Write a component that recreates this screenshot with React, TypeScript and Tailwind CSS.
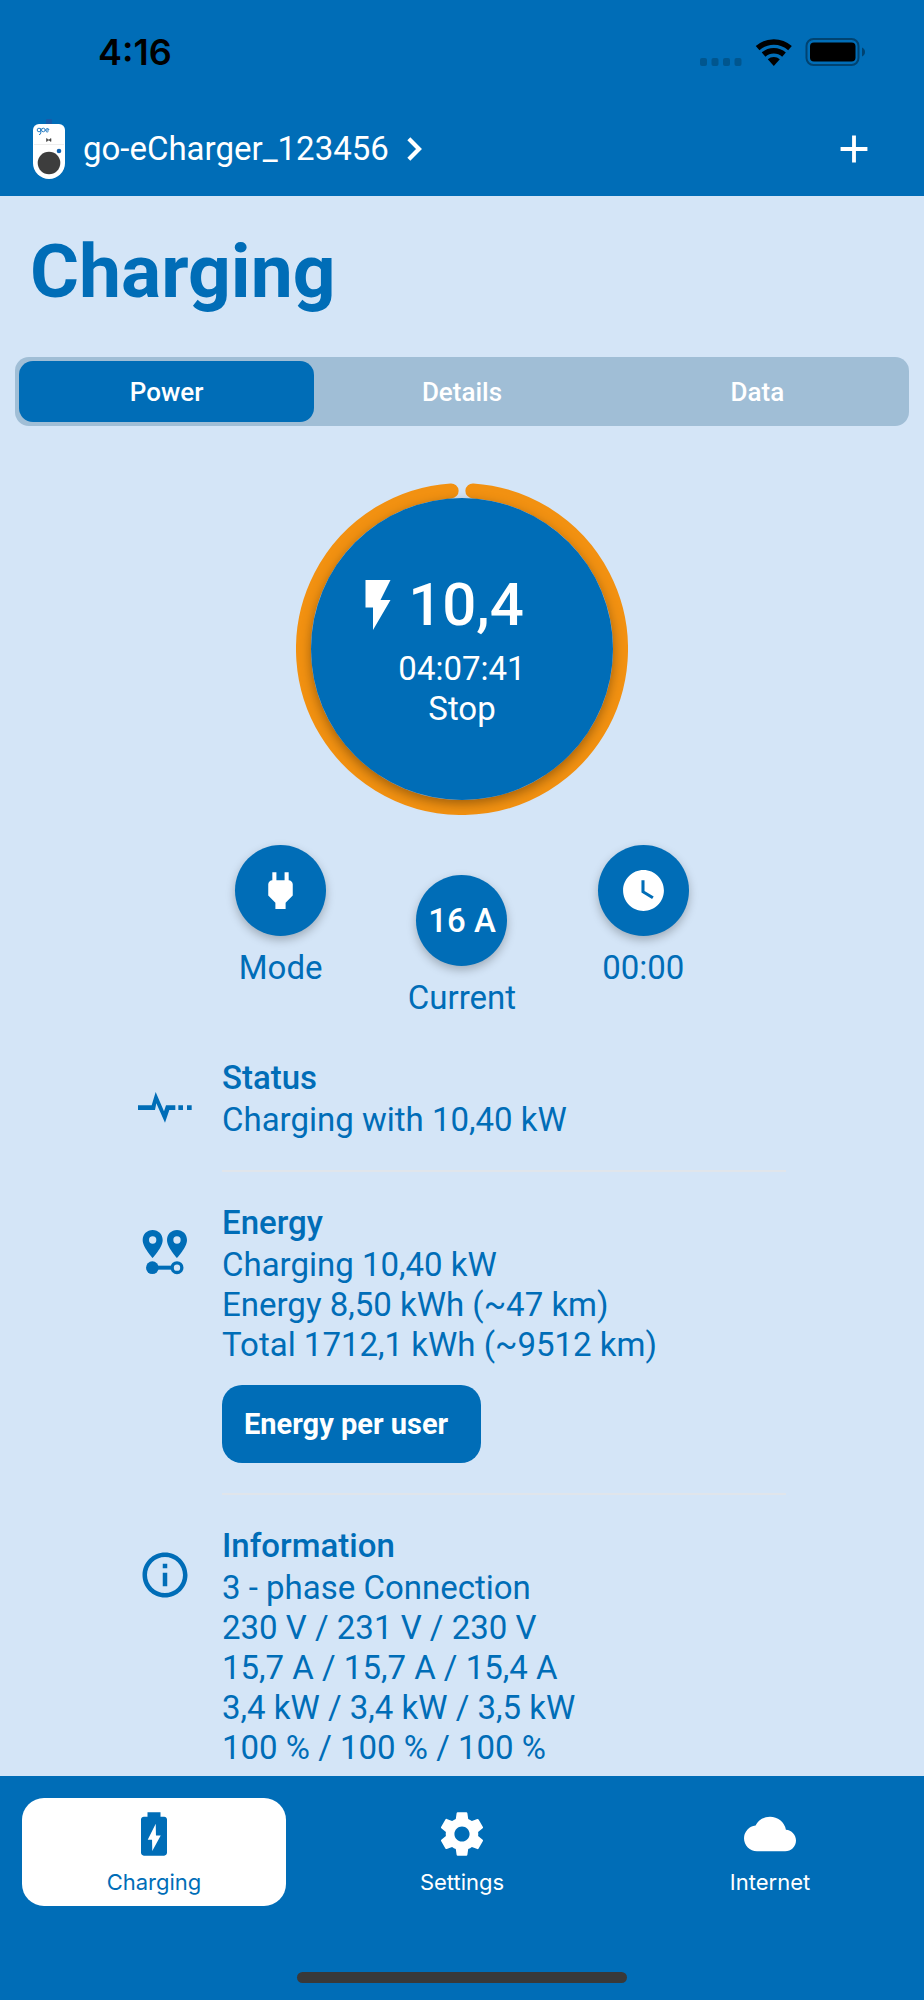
import React, { useState } from 'react'
import {
  MdAdd,
  MdCloud,
  MdFlashOn,
  MdInfoOutline,
  MdPower,
  MdWatchLater
} from 'react-icons/md'

const tabs = ['Power', 'Details', 'Data']

const StatusIcons: React.FC = () => (
  <svg className="h-7 w-[166px]" viewBox="0 0 166 28" aria-hidden="true">
    <g fill="#00568f">
      <rect x="1" y="20" width="7" height="8" rx="2" />
      <rect x="12.500" y="20" width="7" height="8" rx="2" />
      <rect x="24" y="20" width="7" height="8" rx="2" />
      <rect x="35.500" y="20" width="7" height="8" rx="2" />
    </g>
    <g fill="none" stroke="#000" strokeWidth="5.500">
      <path d="M58.600 10.100A24.250 24.250 0 0 1 91 10.100" />
      <path d="M64.600 16.600A15.250 15.250 0 0 1 85 16.600" />
    </g>
    <path d="M68.800 21.300A9 9 0 0 1 80.800 21.300L74.800 28z" />
    <rect x="107.500" y="1" width="52" height="26" rx="7" fill="none" stroke="#004371" strokeWidth="2" />
    <rect x="111" y="4.500" width="45.500" height="19" rx="4" />
    <path d="M163 9.500v9c1.800-.800 3-2.500 3-4.500s-1.200-3.700-3-4.500z" fill="#004371" />
  </svg>
)

const ChargerIcon: React.FC = () => (
  <svg className="h-[60px] w-8" viewBox="0 0 32 60" aria-hidden="true">
    <rect x="13" y="0" width="6" height="6" rx="1" fill="#1a5aa8" />
    <path d="M6 5h20a6 6 0 0 1 6 6v33a16 16 0 0 1-32 0V11a6 6 0 0 1 6-6z" fill="#fff" />
    <path d="M1 25.500h30" stroke="#eee" strokeWidth="1" />
    <g fill="none" stroke="#2c7fc4" strokeWidth="1">
      <circle cx="6" cy="11" r="1.800" />
      <path d="M7.800 9v5a1.800 1.800 0 0 1-1.800 1.600" />
      <circle cx="10.300" cy="11" r="1.800" />
      <path d="M12.500 11h3.500a1.700 1.700 0 1 0-.6 1.600" />
    </g>
    <path d="M13.500 19.500l2.200 1.500-2.200 1.500zM18 19.500l-2.200 1.500 2.200 1.500z" fill="#444" stroke="#444" strokeWidth=".6" />
    <circle cx="26" cy="32" r="2.300" fill="#1263b0" />
    <circle cx="16" cy="44" r="11.300" fill="#3d3d3d" />
  </svg>
)

const ChevronIcon: React.FC = () => (
  <svg className="ml-0.5 size-[46px]" viewBox="0 0 24 24" aria-hidden="true">
    <path d="M9.300 6.700L14.600 12l-5.300 5.300" fill="none" stroke="currentColor" strokeWidth="2.200" />
  </svg>
)

const PulseIcon: React.FC = () => (
  <svg className="size-[54px]" viewBox="0 0 162 162" fill="currentColor" aria-hidden="true">
    <path d="M0 76h41l12-40 25 58 6-18h28v14H94l-13 38-26-58-4 20H0z" />
    <path d="M121 76h14v14h-14zM147 76h14v14h-14z" />
  </svg>
)

const RouteIcon: React.FC = () => (
  <svg className="size-[54px]" viewBox="0 0 162 162" fill="currentColor" aria-hidden="true">
    <path
      fillRule="evenodd"
      d="M44 15c-17 0-30 13-30 30 0 22 30 54 30 54s30-32 30-54c0-17-13-30-30-30zm0 19a11 11 0 1 1 0 22 11 11 0 0 1 0-22zM117 15c-17 0-30 13-30 30 0 22 30 54 30 54s30-32 30-54c0-17-13-30-30-30zm0 19a11 11 0 1 1 0 22 11 11 0 0 1 0-22z"
    />
    <circle cx="43" cy="128" r="19" />
    <path d="M43 122h60v12H43z" />
    <circle cx="117" cy="128" r="14.500" fill="none" stroke="currentColor" strokeWidth="10" />
  </svg>
)

const BatteryIcon: React.FC = () => (
  <svg className="size-[52px]" viewBox="0 0 24 24" fill="currentColor" aria-hidden="true">
    <path
      fillRule="evenodd"
      d="M15 2H9v2H7.300C6.600 4 6 4.600 6 5.300v15.400c0 .700.600 1.300 1.300 1.300h9.400c.700 0 1.300-.600 1.300-1.300V5.300c0-.700-.600-1.300-1.300-1.300H15zM12.800 7.300L9.100 14.600h2l.1 5.200 3.900-7.100h-2.200z"
    />
  </svg>
)

const GearIcon: React.FC = () => (
  <svg className="size-[52px]" viewBox="0 0 24 24" fill="currentColor" aria-hidden="true">
    <path d="M19.43 12.98c.04-.32.07-.64.07-.98s-.03-.66-.07-.98l2.110-1.650c.19-.15.24-.42.12-.64l-2-3.460c-.12-.22-.39-.3-.61-.22l-2.490 1c-.52-.4-1.080-.73-1.690-.98l-.38-2.650C14.46 2.180 14.25 2 14 2h-4c-.25 0-.46.18-.49.42l-.38 2.650c-.61.25-1.170.59-1.690.98l-2.490-1c-.23-.09-.49 0-.61.22l-2 3.460c-.13.22-.07.49.12.64l2.110 1.650c-.04.32-.07.65-.07.98s.03.66.07.98l-2.110 1.650c-.19.15-.24.42-.12.64l2 3.460c.12.22.39.3.61.22l2.490-1c.52.4 1.080.73 1.690.98l.38 2.650c.03.24.24.42.49.42h4c.25 0 .46-.18.49-.42l.38-2.650c.61-.25 1.170-.59 1.690-.98l2.490 1c.23.09.49 0 .61-.22l2-3.460c.12-.22.07-.49-.12-.64l-2.110-1.650zM12 15.500c-1.930 0-3.500-1.570-3.500-3.500s1.570-3.500 3.500-3.500 3.500 1.570 3.500 3.500-1.570 3.500-3.500 3.500z" />
  </svg>
)

const navItems = [
  { label: 'Charging', icon: <BatteryIcon /> },
  { label: 'Settings', icon: <GearIcon /> },
  { label: 'Internet', icon: <MdCloud className="size-[52px]" /> }
]

interface RoundButtonProps {
  label: string
  className?: string
  children: React.ReactNode
}

const RoundButton: React.FC<RoundButtonProps> = ({ label, className = '', children }) => (
  <div className={`flex flex-col items-center gap-3 ${className}`}>
    <button
      aria-label={label}
      className="flex size-[91px] items-center justify-center rounded-full bg-[#006db7] font-medium text-white shadow-[0_4px_10px_rgba(0,0,0,0.25)]"
    >
      {children}
    </button>
    <span>{label}</span>
  </div>
)

interface InfoRowProps {
  icon: React.ReactNode
  title: string
  lines: string[]
  last?: boolean
  children?: React.ReactNode
}

const InfoRow: React.FC<InfoRowProps> = ({ icon, title, lines, last, children }) => (
  <section className="flex gap-[30px]">
    <div className="mt-6 shrink-0">{icon}</div>
    <div className={last ? 'flex-1' : 'mb-[29px] flex-1 border-b-2 border-[#e0e5eb] pb-[30px]'}>
      <h2 className="leading-11 font-medium">{title}</h2>
      {lines.map((line) => (
        <p key={line}>{line}</p>
      ))}
      {children}
    </div>
  </section>
)

const App: React.FC = () => {
  const [activeTab, setActiveTab] = useState('Power')
  const [activeNav, setActiveNav] = useState('Charging')

  return (
    <div className="flex min-h-screen flex-col bg-[#d4e5f7] font-['Roboto',sans-serif] text-[33px] leading-10 text-[#006db7]">
      <header className="bg-[#006db7] text-white">
        <div className="flex h-[103px] items-center justify-between pr-[59px] pl-[98px] text-black">
          <span className="font-['Inter',sans-serif] text-[36px] font-semibold">4:16</span>
          <StatusIcons />
        </div>
        <div className="flex h-[93px] items-center justify-between pr-[47px] pb-0.5 pl-[33px]">
          <button className="flex items-center">
            <ChargerIcon />
            <span className="ml-[18px]">go-eCharger_123456</span>
            <ChevronIcon />
          </button>
          <button aria-label="Add charger">
            <MdAdd className="size-[46px]" />
          </button>
        </div>
      </header>

      <main className="flex-1 pb-2">
        <h1 className="px-[30px] pt-7 text-[75px] leading-[94px] font-bold">Charging</h1>

        <div role="tablist" className="mx-[15px] mt-[39px] grid grid-cols-3 rounded-[14px] bg-[#a0bed6] p-1">
          {tabs.map((tab) => (
            <button
              key={tab}
              role="tab"
              aria-selected={tab === activeTab}
              onClick={() => setActiveTab(tab)}
              className={`h-[61px] rounded-[14px] text-[26px] font-medium text-white ${tab === activeTab ? 'bg-[#006db7]' : ''}`}
            >
              {tab}
            </button>
          ))}
        </div>

        <div className="relative mx-auto mt-[57px] flex size-[332px] items-center justify-center">
          <svg className="absolute inset-0 size-full" viewBox="0 0 332 332" aria-hidden="true">
            <path
              d="M176.900 7.900A158.500 158.500 0 1 1 155.100 7.900"
              fill="none"
              stroke="#f29111"
              strokeWidth="15"
              strokeLinecap="round"
            />
          </svg>
          <button className="relative flex size-[302px] flex-col items-center justify-center rounded-full bg-[#006db7] text-white shadow-[0_4px_12px_rgba(0,0,0,0.35)]">
            <span className="mb-2 flex items-center pr-[52px] text-[60px] leading-[72px] font-medium">
              <MdFlashOn className="size-[60px]" />
              10,4
            </span>
            <span>04:07:41</span>
            <span>Stop</span>
          </button>
        </div>

        <div className="mx-auto mt-[30px] grid w-[544px] max-w-full grid-cols-3">
          <RoundButton label="Mode">
            <MdPower className="size-[49px]" />
          </RoundButton>
          <RoundButton label="Current" className="mt-[30px]">
            16 A
          </RoundButton>
          <RoundButton label="00:00">
            <MdWatchLater className="size-[49px]" />
          </RoundButton>
        </div>

        <div className="mt-[38px] px-[138px]">
          <InfoRow icon={<PulseIcon />} title="Status" lines={['Charging with 10,40 kW']} />
          <InfoRow
            icon={<RouteIcon />}
            title="Energy"
            lines={['Charging 10,40 kW', 'Energy 8,50 kWh (~47 km)', 'Total 1712,1 kWh (~9512 km)']}
          >
            <button className="mt-5 flex h-[78px] items-center rounded-[20px] bg-[#006db7] pr-[33px] pl-[22px] text-[29px] font-bold text-white">
              Energy per user
            </button>
          </InfoRow>
          <InfoRow
            icon={<MdInfoOutline className="size-[54px]" />}
            title="Information"
            lines={[
              '3 - phase Connection',
              '230 V / 231 V / 230 V',
              '15,7 A / 15,7 A / 15,4 A',
              '3,4 kW / 3,4 kW / 3,5 kW',
              '100 % / 100 % / 100 %'
            ]}
            last
          />
        </div>
      </main>

      <nav className="bg-[#006db7] pt-[22px] pb-[17px] font-['Inter',sans-serif] text-[22px] leading-7">
        <div className="grid grid-cols-3">
          {navItems.map((item) => (
            <button
              key={item.label}
              onClick={() => setActiveNav(item.label)}
              className={`mx-[22px] flex h-[108px] flex-col items-center gap-2 rounded-[22px] pt-2.5 ${item.label === activeNav ? 'bg-white text-[#006db7]' : 'text-white'}`}
            >
              {item.icon}
              <span>{item.label}</span>
            </button>
          ))}
        </div>
        <div className="mx-auto mt-[66px] h-[11px] w-[330px] rounded-full bg-[#393939]" />
      </nav>
    </div>
  )
}

export default App
